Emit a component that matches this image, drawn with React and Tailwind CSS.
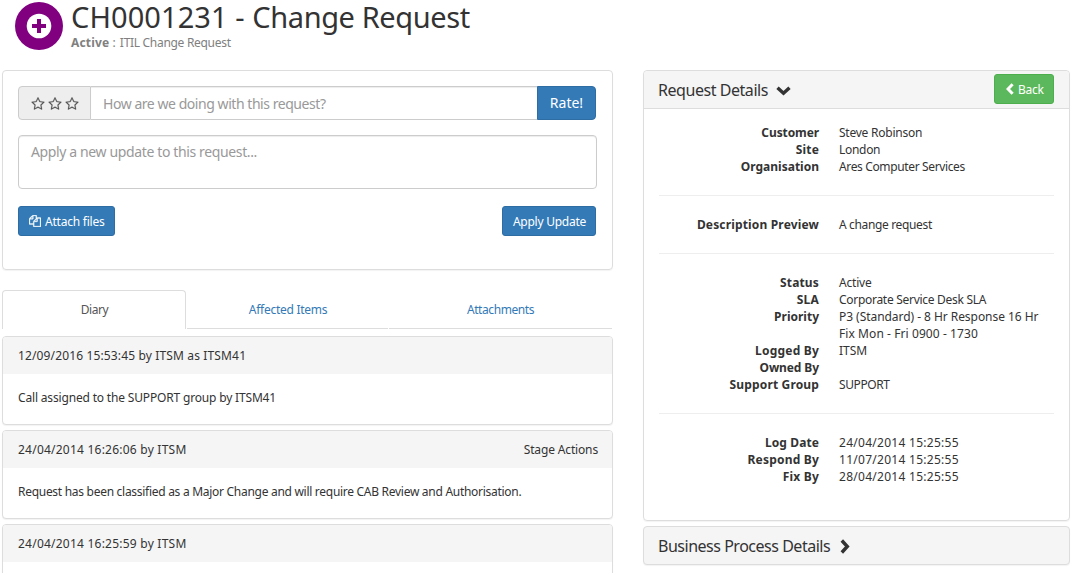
const Star = () => (
  <svg viewBox="0 0 1792 1792" className="h-[14px] w-[14px] fill-[#555] stroke-[#555] stroke-[20]">
    <path d="M1201 1004l306-297-422-62-189-382-189 382-422 62 306 297-73 421 378-199 377 199zm527-357q0 22-26 48l-363 354 86 500q1 7 1 20 0 50-41 50-19 0-40-12l-449-236-449 236q-22 12-40 12-21 0-31.5-14.5t-10.5-35.5q0-6 2-20l86-500-364-354q-25-27-25-48 0-37 56-46l502-73 225-455q19-41 49-41t49 41l225 455 502 73q56 9 56 46z" />
  </svg>
);

const Files = () => (
  <svg viewBox="0 0 1792 1792" className="h-3 w-3 fill-white stroke-white stroke-[50]">
    <path d="M1696 384q40 0 68 28t28 68v1216q0 40-28 68t-68 28h-960q-40 0-68-28t-28-68v-288h-544q-40 0-68-28t-28-68v-672q0-40 20-88t48-76l408-408q28-28 76-48t88-20h416q40 0 68 28t28 68v328q68-40 128-40h416zm-544 213l-299 299h299v-299zm-640-384l-299 299h299v-299zm196 647l316-316v-416h-384v416q0 40-28 68t-68 28h-416v640h512v-256q0-40 20-88t48-76zm956 804v-1152h-384v416q0 40-28 68t-68 28h-416v640h896z" />
  </svg>
);

function Entry({ title, titleClass, action, body, bodyClass }) {
  return (
    <div className="mb-[5px] h-[89px] shrink-0 overflow-hidden rounded border border-[#ddd] bg-white shadow-[0_1px_1px_rgba(0,0,0,0.05)]">
      <div className="flex h-[37px] items-center justify-between bg-[#f5f5f5] pl-[15px] pr-[14px]">
        <span className={titleClass}>{title}</span>
        <span className="tracking-[-0.15px]">{action}</span>
      </div>
      <div className="flex h-[47px] items-center pl-[15px]">
        <span className={bodyClass}>{body}</span>
      </div>
    </div>
  );
}

function Rows({ rows }) {
  return (
    <dl className="grid grid-cols-[160px_215px] gap-x-5 leading-[17px]">
      {rows.map(([label, labelClass, lines, valueClass]) => (
        <div key={label} className="contents">
          <dt className="text-right font-bold"><span className={labelClass}>{label}</span></dt>
          <dd className="min-h-[17px]"><span className={valueClass}>{lines}</span></dd>
        </div>
      ))}
    </dl>
  );
}

const Rule = () => <hr className="my-5 border-[#eee]" />;

const customer = [
  ["Customer", "tracking-[-0.1px]", "Steve Robinson", "tracking-[-0.24px]"],
  ["Site", "tracking-[0.2px]", "London", "tracking-[-0.3px]"],
  ["Organisation", "", "Ares Computer Services", "tracking-[-0.36px]"],
];
const description = [["Description Preview", "tracking-[0.16px]", "A change request", "tracking-[-0.35px]"]];
const status = [
  ["Status", "tracking-[0.15px]", "Active", "tracking-[-0.2px]"],
  ["SLA", "tracking-[0.2px]", "Corporate Service Desk SLA", "tracking-[-0.29px]"],
  [
    "Priority",
    "",
    <>
      <span className="tracking-[-0.05px]">P3 (Standard) - 8 Hr Response 16 Hr</span>{" "}
      <span className="tracking-[0.08px]">Fix Mon - Fri 0900 - 1730</span>
    </>,
    "",
  ],
  ["Logged By", "tracking-[0.2px]", "ITSM", ""],
  ["Owned By", "tracking-[-0.1px]", "", ""],
  ["Support Group", "tracking-[0.15px]", "SUPPORT", "tracking-[-0.4px]"],
];
const dates = [
  ["Log Date", "tracking-[0.1px]", "24/04/2014 15:25:55", "tracking-[0.28px]"],
  ["Respond By", "tracking-[0.2px]", "11/07/2014 15:25:55", "tracking-[0.28px]"],
  ["Fix By", "tracking-[0.2px]", "28/04/2014 15:25:55", "tracking-[0.28px]"],
];

export default function App() {
  return (
    <div className="h-[573px] w-[1075px] overflow-hidden bg-white font-['Noto_Sans',sans-serif] text-[12px] leading-[17px] text-[#333]">
      <header className="flex h-[70px] items-start pl-[15px]">
        <svg viewBox="0 0 48 48" className="mt-[2px] h-12 w-12">
          <circle cx="24" cy="24" r="24" fill="#800080" />
          <circle cx="24" cy="24" r="12.3" fill="#fff" />
          <path d="M24 17v14M17 24h14" stroke="#800080" strokeWidth="4" />
        </svg>
        <div className="ml-2">
          <h1 className="h-[34px] whitespace-nowrap text-[29px] leading-[34px]">
            <span className="tracking-[0.08px]">CH0001231 - </span>
            <span className="tracking-[-0.4px]">Change Request</span>
          </h1>
          <p className="flex gap-[4px] text-[#808080]">
            <span className="tracking-[0.15px]"><b>Active</b> :</span>
            <span className="tracking-[-0.3px]">ITIL Change Request</span>
          </p>
        </div>
      </header>
      <main className="flex items-start">
        <div className="ml-[2px] flex w-[611px] flex-col">
          <section className="h-[200px] rounded border border-[#ddd] px-[15px] pt-[15px] shadow-[0_1px_1px_rgba(0,0,0,0.05)]">
            <div className="flex h-[34px] w-[578px] text-[14px]">
              <div className="flex w-[73px] items-center justify-center gap-[3px] rounded-l border border-[#ccc] bg-[#eee] pt-px">
                <Star /><Star /><Star />
              </div>
              <div className="flex flex-1 items-center border-y border-[#ccc] pl-3 text-[#999] shadow-[inset_0_1px_1px_rgba(0,0,0,0.075)]">
                <span className="tracking-[-0.45px]">How are we doing with this request?</span>
              </div>
              <button className="w-[59px] rounded-r border border-[#2e6da4] bg-[#337ab7] pb-px text-white">Rate!</button>
            </div>
            <div className="mt-[15px] h-[54px] w-[579px] rounded border border-[#ccc] pl-3 pt-[6px] text-[14px] leading-5 text-[#999] shadow-[inset_0_1px_1px_rgba(0,0,0,0.075)]">
              <span className="tracking-[-0.37px]">Apply a new update to this request...</span>
            </div>
            <div className="mt-[17px] flex w-[578px] justify-between">
              <button className="flex h-[30px] w-[97px] items-center gap-1 rounded-[3px] border border-[#2e6da4] bg-[#337ab7] pl-[10px] text-white">
                <Files /><span className="whitespace-nowrap tracking-[-0.22px]">Attach files</span>
              </button>
              <button className="h-[30px] w-[94px] rounded-[3px] border border-[#2e6da4] bg-[#337ab7] pl-px tracking-[-0.25px] text-white">Apply Update</button>
            </div>
          </section>
          <nav className="mb-[7px] mt-5 flex h-[39px] w-[610px] text-center text-[#337ab7]">
            <div className="w-[184px] rounded-t border border-b-0 border-[#ddd] pl-px leading-[38px] tracking-[-0.4px] text-[#555]">Diary</div>
            <div className="ml-px w-[201px] border-b border-[#ddd] pl-px pt-px leading-[38px] tracking-[-0.27px]">Affected Items</div>
            <div className="ml-px flex-1 border-b border-[#ddd] pt-px leading-[38px] tracking-[-0.42px]">Attachments</div>
          </nav>
          <Entry
            title="12/09/2016 15:53:45 by ITSM as ITSM41"
            titleClass="tracking-[0.14px]"
            body="Call assigned to the SUPPORT group by ITSM41"
            bodyClass="tracking-[-0.17px]"
          />
          <Entry
            title="24/04/2014 16:26:06 by ITSM"
            titleClass="tracking-[0.23px]"
            action="Stage Actions"
            body="Request has been classified as a Major Change and will require CAB Review and Authorisation."
            bodyClass="tracking-[-0.285px]"
          />
          <Entry title="24/04/2014 16:25:59 by ITSM" titleClass="tracking-[0.23px]" />
        </div>
        <div className="ml-[30px] w-[427px]">
          <section className="h-[451px] rounded border border-[#ddd] shadow-[0_1px_1px_rgba(0,0,0,0.05)]">
            <div className="flex h-[38px] items-center justify-between rounded-t border-b border-[#ddd] bg-[#f5f5f5] pl-[14px] pr-[15px]">
              <h2 className="flex items-center gap-2 pt-[2px] text-[16px]">
                <span className="tracking-[-0.45px]">Request Details</span>
                <svg viewBox="0 0 15 10" className="h-[10px] w-[15px]"><path d="M1.5 1.8L7.5 7.3L13.5 1.8" fill="none" stroke="#333" strokeWidth="3.4" /></svg>
              </h2>
              <button className="-mt-px flex h-[30px] w-[60px] items-center gap-1 rounded-[3px] border border-[#4cae4c] bg-[#5cb85c] pl-[11px] text-white">
                <svg viewBox="0 0 8 12" className="h-3 w-2"><path d="M6.6 1.2L2 6L6.6 10.8" fill="none" stroke="#fff" strokeWidth="3" /></svg>
                <span className="tracking-[-0.3px]">Back</span>
              </button>
            </div>
            <div className="px-[15px] pt-[15px]">
              <Rows rows={customer} />
              <Rule />
              <Rows rows={description} />
              <Rule />
              <Rows rows={status} />
              <Rule />
              <Rows rows={dates} />
            </div>
          </section>
          <section className="mt-[5px] flex h-[39px] items-center gap-[10px] rounded border border-[#ddd] bg-[#f5f5f5] pl-[14px] pt-[2px] text-[16px] shadow-[0_1px_1px_rgba(0,0,0,0.05)]">
            <span className="tracking-[-0.48px]">Business Process Details</span>
            <svg viewBox="0 0 10 15" className="h-[15px] w-[10px]"><path d="M1.8 1.5L7.3 7.5L1.8 13.5" fill="none" stroke="#333" strokeWidth="3.4" /></svg>
          </section>
        </div>
      </main>
    </div>
  );
}
